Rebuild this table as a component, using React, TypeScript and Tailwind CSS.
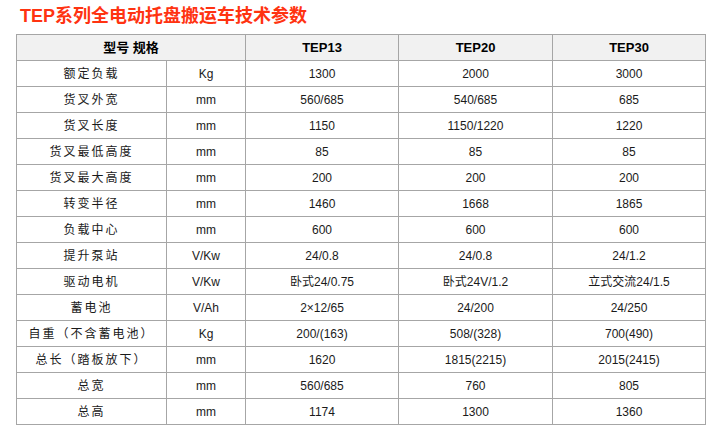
const rows: [string, string, string, string, string][] = [
  ["额定负载", "Kg", "1300", "2000", "3000"],
  ["货叉外宽", "mm", "560/685", "540/685", "685"],
  ["货叉长度", "mm", "1150", "1150/1220", "1220"],
  ["货叉最低高度", "mm", "85", "85", "85"],
  ["货叉最大高度", "mm", "200", "200", "200"],
  ["转变半径", "mm", "1460", "1668", "1865"],
  ["负载中心", "mm", "600", "600", "600"],
  ["提升泵站", "V/Kw", "24/0.8", "24/0.8", "24/1.2"],
  ["驱动电机", "V/Kw", "卧式24/0.75", "卧式24V/1.2", "立式交流24/1.5"],
  ["蓄电池", "V/Ah", "2×12/65", "24/200", "24/250"],
  ["自重（不含蓄电池）", "Kg", "200/(163)", "508/(328)", "700(490)"],
  ["总长（踏板放下）", "mm", "1620", "1815(2215)", "2015(2415)"],
  ["总宽", "mm", "560/685", "760", "805"],
  ["总高", "mm", "1174", "1300", "1360"],
];

const font = { fontFamily: '"Liberation Sans", Arial, "Noto Sans CJK SC", sans-serif' };

export default function App() {
  return (
    <div className="w-[720px] h-[433px] bg-white pl-4 pt-[5px]" style={font}>
      <h1 className="pl-1 text-[18px] leading-[22px] font-bold text-[#ff3311] h-[29px]">
        TEP系列全电动托盘搬运车技术参数
      </h1>
      <table className="border-collapse table-fixed w-[689px] text-[12px] text-[#1a1a1a]">
        <colgroup>
          <col className="w-[150px]" />
          <col className="w-[79px]" />
          <col className="w-[153px]" />
          <col className="w-[154px]" />
          <col className="w-[153px]" />
        </colgroup>
        <thead>
          <tr className="h-[26px] bg-[#f1f1f1]">
            <th colSpan={2} className="border border-[#a6a6a6] p-0 text-[13px] font-bold text-black">
              型号 规格
            </th>
            <th className="border border-[#a6a6a6] p-0 text-[13px] font-bold text-black">TEP13</th>
            <th className="border border-[#a6a6a6] p-0 text-[13px] font-bold text-black">TEP20</th>
            <th className="border border-[#a6a6a6] p-0 text-[13px] font-bold text-black">TEP30</th>
          </tr>
        </thead>
        <tbody>
          {rows.map((r) => (
            <tr key={r[0]} className="h-[26px]">
              <td className="border border-[#a6a6a6] p-0 text-center tracking-[2px]">{r[0]}</td>
              <td className="border border-[#a6a6a6] p-0 text-center">{r[1]}</td>
              <td className="border border-[#a6a6a6] p-0 text-center">{r[2]}</td>
              <td className="border border-[#a6a6a6] p-0 text-center">{r[3]}</td>
              <td className="border border-[#a6a6a6] p-0 text-center">{r[4]}</td>
            </tr>
          ))}
        </tbody>
      </table>
    </div>
  );
}
